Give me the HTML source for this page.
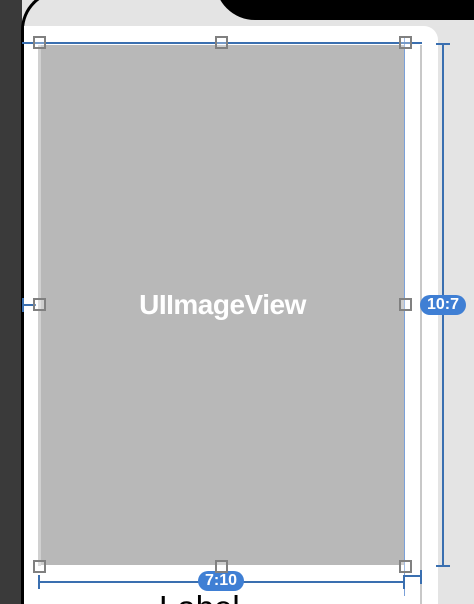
<!DOCTYPE html>
<html style="margin:0;width:474px;height:604px;overflow:hidden"><head><style>
body{margin:0;width:474px;height:604px;overflow:hidden;background:#e4e4e4;position:relative;font-family:"Liberation Sans",sans-serif}
div{position:absolute;box-sizing:border-box}
.h{width:13px;height:13px;border:2px solid #808080;background:rgba(255,255,255,0.3)}
.b{background:#3a6fb0}
.badge{background:#3f7fd4;color:#fff;font-weight:bold;font-size:16px;text-align:center;border-radius:10px;line-height:20px}
</style></head><body>
<div style="left:0;top:0;width:22px;height:604px;background:#3a3a3a"></div>
<div style="left:21px;top:-10px;width:60px;height:614px;border-left:3px solid #000;border-top:3px solid #000;border-radius:40px 0 0 0"></div>
<div style="left:215px;top:-30px;width:259px;height:50px;background:#000;border-radius:0 0 0 40px"></div>
<div style="left:24px;top:26px;width:414px;height:578px;background:#fff;border-radius:0 14px 0 0"></div>
<div style="left:420px;top:45px;width:2px;height:559px;background:#c8c8c8"></div>
<div style="left:38px;top:45px;width:3px;height:521px;background:#d0d0d0"></div>
<div style="left:41px;top:45px;width:363px;height:520px;background:#b8b8b8"></div>
<div style="left:404px;top:36px;width:1px;height:560px;background:#7aa0d8"></div>
<div class="b" style="left:22px;top:42px;width:400px;height:2px"></div>
<div class="b" style="left:436px;top:43px;width:14px;height:2px"></div>
<div class="b" style="left:442px;top:44px;width:2px;height:522px"></div>
<div class="b" style="left:436px;top:565px;width:14px;height:2px"></div>
<div class="badge" style="left:420px;top:295px;width:46px">10:7</div>
<div class="b" style="left:22px;top:304px;width:14px;height:2px"></div>
<div class="b" style="left:22px;top:298px;width:2px;height:14px"></div>
<div class="b" style="left:39px;top:581px;width:366px;height:2px"></div>
<div class="b" style="left:38px;top:575px;width:2px;height:14px"></div>
<div class="b" style="left:403px;top:575px;width:2px;height:14px"></div>
<div class="b" style="left:405px;top:575px;width:16px;height:2px"></div>
<div class="b" style="left:420px;top:570px;width:2px;height:14px"></div>
<div class="badge" style="left:198px;top:571px;width:46px;height:20px;line-height:20px">7:10</div>
<div style="left:41px;top:288px;width:363px;text-align:center;color:#fff;font-weight:bold;font-size:28px;line-height:34px;letter-spacing:-0.5px">UIImageView</div>
<div style="left:159px;top:591px;height:13px;overflow:hidden;font-size:33px;line-height:33px;color:#000">Label</div>
<div class="h" style="left:33px;top:36px"></div>
<div class="h" style="left:215px;top:36px"></div>
<div class="h" style="left:399px;top:36px"></div>
<div class="h" style="left:33px;top:298px"></div>
<div class="h" style="left:399px;top:298px"></div>
<div class="h" style="left:33px;top:560px"></div>
<div class="h" style="left:215px;top:560px"></div>
<div class="h" style="left:399px;top:560px"></div>
</body></html>
